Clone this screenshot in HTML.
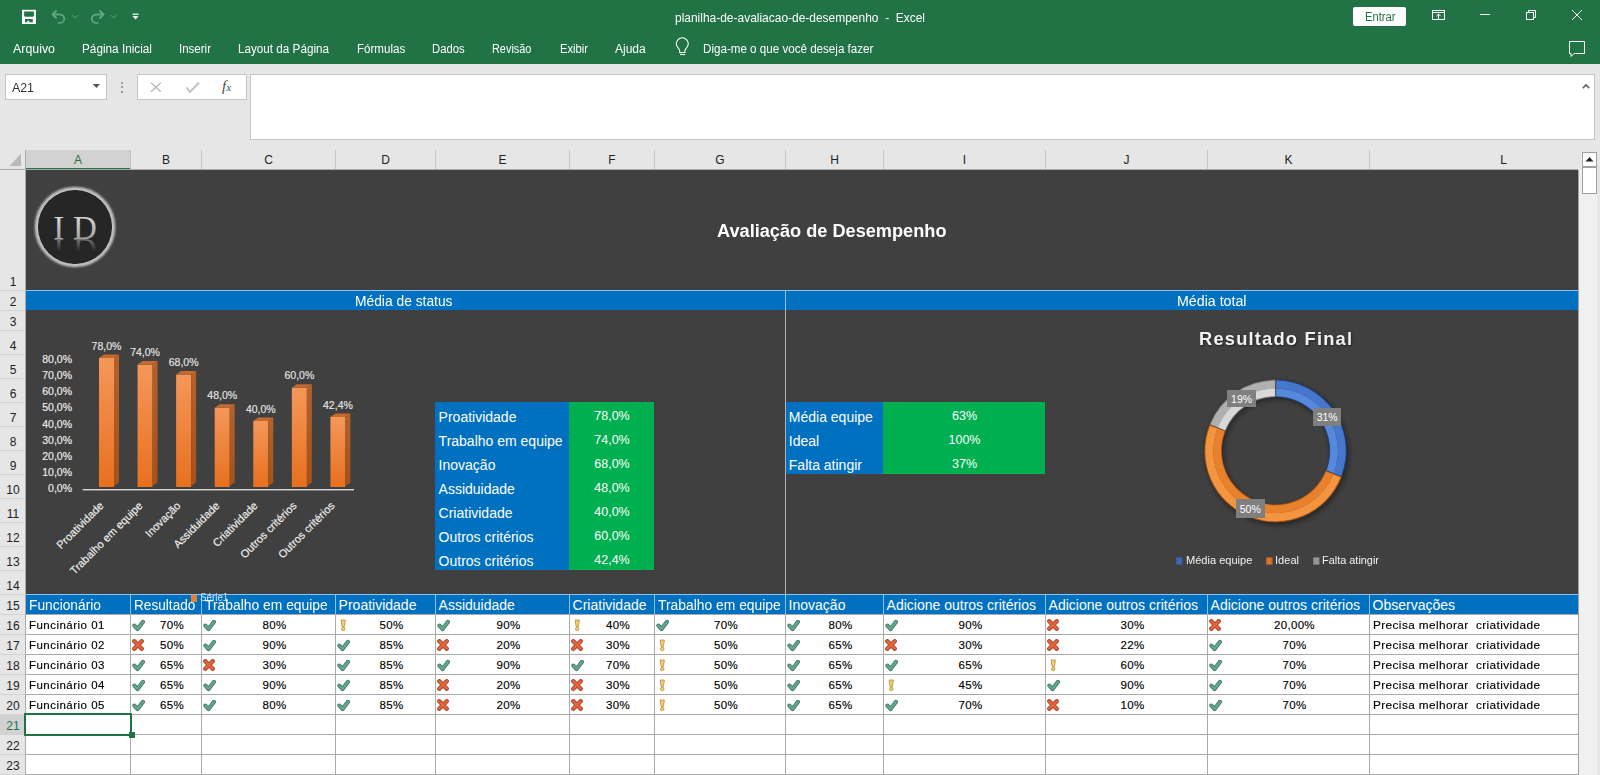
<!DOCTYPE html><html><head><meta charset="utf-8"><style>*{margin:0;padding:0;box-sizing:border-box}html,body{width:1600px;height:775px;overflow:hidden;background:#e6e6e6;font-family:"Liberation Sans",sans-serif}.a{position:absolute;white-space:pre}</style></head><body>
<div class="a" style="left:0px;top:0px;width:1600px;height:64px;background:#217346;"></div>
<svg class="a" style="left:0;top:0" width="160" height="32" viewBox="0 0 160 32">
<rect x="22" y="9.8" width="14" height="14.2" fill="#fff"/>
<path d="M24.1 11.5 h9.8 v4.3 l-0.9 0.9 h-8 l-0.9 -0.9z" fill="#217346"/>
<rect x="25" y="19" width="7.8" height="3.3" fill="#217346"/>
<rect x="27.2" y="20.8" width="2" height="1.6" fill="#fff"/>
<g fill="none" stroke="#5ea57d" stroke-width="1.9" stroke-linecap="round">
<path d="M52.5 14.5 L56 11 M52.5 14.5 L56 18 M52.5 14.5 H60 a4.2 4.2 0 0 1 0 8.4 H58.5"/>
<path d="M103.5 14.5 L100 11 M103.5 14.5 L100 18 M103.5 14.5 H96 a4.2 4.2 0 0 0 0 8.4 H97.5"/>
<path d="M72.5 15.5 l2.6 2.4 2.6 -2.4 M111 15.5 l2.6 2.4 2.6 -2.4" stroke-width="1"/>
</g>
<rect x="132.5" y="13.6" width="6" height="1.2" fill="#fff"/>
<path d="M132.5 16 h6 l-3 3.6z" fill="#fff"/>
</svg>
<div class="a" style="left:1353px;top:7px;width:53px;height:19px;background:#fff;border-radius:2px"></div>
<svg class="a" style="left:1420px;top:0" width="180" height="64" viewBox="1420 0 180 64">
<g fill="none" stroke="#fff" stroke-width="1">
<rect x="1432.5" y="10.5" width="12" height="9"/>
<path d="M1432.5 12.5 h12"/>
<path d="M1438.5 19 v-5 M1436.3 16.2 l2.2 -2.2 2.2 2.2"/>
<path d="M1480 14.5 h10"/>
<rect x="1526.5" y="12.5" width="7" height="7"/>
<path d="M1528.5 12.5 v-2 h7 v7 h-2"/>
<path d="M1572 10 l10 10 M1582 10 l-10 10"/>
<path d="M1569.5 41.5 h15 v12 h-10.5 l-3 3 v-3 h-1.5 z"/>
</g>
</svg>
<svg class="a" style="left:670px;top:36px" width="24" height="24" viewBox="670 36 24 24">
<g fill="none" stroke="#fff" stroke-width="1.1">
<path d="M679.6 52.5 v-2 c0-2 -3.3-3.2 -3.3-6.7 a6 6 0 0 1 12 0 c0 3.5 -3.3 4.7 -3.3 6.7 v2 z"/>
<path d="M680 54.5 h5"/>
</g></svg>
<div class="a" style="left:0px;top:64px;width:1600px;height:86px;background:#e6e6e6;"></div>
<div class="a" style="left:5px;top:74px;width:102px;height:26px;background:#fff;border:1px solid #c6c6c6"></div>
<svg class="a" style="left:90px;top:80px" width="14" height="12" viewBox="90 80 14 12"><path d="M92.8 84 h7.2 l-3.6 4z" fill="#555"/></svg>
<div class="a" style="left:121px;top:82px;width:2px;height:2px;background:#9a9a9a;"></div>
<div class="a" style="left:121px;top:86px;width:2px;height:2px;background:#9a9a9a;"></div>
<div class="a" style="left:121px;top:91px;width:2px;height:2px;background:#9a9a9a;"></div>
<div class="a" style="left:137px;top:74px;width:110px;height:26px;background:#fff;border:1px solid #c6c6c6"></div>
<svg class="a" style="left:140px;top:76px" width="110" height="22" viewBox="140 76 110 22">
<g fill="none" stroke="#b4b4b4" stroke-width="1.2">
<path d="M151 82.8 l9.8 9 M160.8 82.8 l-9.8 9"/>
</g>
<path d="M186.5 87.5 l3.5 4.5 l9-9.5" fill="none" stroke="#c2c2c2" stroke-width="2"/>
</svg>
<div class="a" style="left:250px;top:74px;width:1345px;height:66px;background:#fff;border:1px solid #c6c6c6"></div>
<svg class="a" style="left:1580px;top:80px" width="12" height="12" viewBox="1580 80 12 12"><path d="M1582.8 88.2 l3.2 -3.2 3.2 3.2" fill="none" stroke="#666" stroke-width="1.7"/></svg>
<div class="a" style="left:0px;top:150px;width:1580px;height:20px;background:#e6e6e6;"></div>
<div class="a" style="left:26px;top:150px;width:105px;height:19px;background:#d2d2d2;"></div>
<div class="a" style="left:26px;top:168px;width:105px;height:2px;background:#217346;"></div>
<div class="a" style="left:0px;top:169px;width:1578px;height:1px;background:#ababab;"></div>
<div class="a" style="left:130px;top:150px;width:1px;height:19px;background:#c6c6c6;"></div>
<div class="a" style="left:201px;top:150px;width:1px;height:19px;background:#c6c6c6;"></div>
<div class="a" style="left:335px;top:150px;width:1px;height:19px;background:#c6c6c6;"></div>
<div class="a" style="left:435px;top:150px;width:1px;height:19px;background:#c6c6c6;"></div>
<div class="a" style="left:569px;top:150px;width:1px;height:19px;background:#c6c6c6;"></div>
<div class="a" style="left:654px;top:150px;width:1px;height:19px;background:#c6c6c6;"></div>
<div class="a" style="left:785px;top:150px;width:1px;height:19px;background:#c6c6c6;"></div>
<div class="a" style="left:883px;top:150px;width:1px;height:19px;background:#c6c6c6;"></div>
<div class="a" style="left:1045px;top:150px;width:1px;height:19px;background:#c6c6c6;"></div>
<div class="a" style="left:1207px;top:150px;width:1px;height:19px;background:#c6c6c6;"></div>
<div class="a" style="left:1369px;top:150px;width:1px;height:19px;background:#c6c6c6;"></div>
<svg class="a" style="left:0;top:150px" width="26" height="20" viewBox="0 150 26 20"><path d="M21 153.5 v12.5 h-11.5z" fill="#b9b9b9"/></svg>
<div class="a" style="left:0px;top:170px;width:25px;height:605px;background:#e6e6e6;"></div>
<div class="a" style="left:25px;top:150px;width:1px;height:625px;background:#ababab;"></div>
<div class="a" style="left:0px;top:290px;width:25px;height:1px;background:#d4d4d4;"></div>
<div class="a" style="left:0px;top:310px;width:25px;height:1px;background:#d4d4d4;"></div>
<div class="a" style="left:0px;top:330px;width:25px;height:1px;background:#d4d4d4;"></div>
<div class="a" style="left:0px;top:354px;width:25px;height:1px;background:#d4d4d4;"></div>
<div class="a" style="left:0px;top:378px;width:25px;height:1px;background:#d4d4d4;"></div>
<div class="a" style="left:0px;top:402px;width:25px;height:1px;background:#d4d4d4;"></div>
<div class="a" style="left:0px;top:426px;width:25px;height:1px;background:#d4d4d4;"></div>
<div class="a" style="left:0px;top:450px;width:25px;height:1px;background:#d4d4d4;"></div>
<div class="a" style="left:0px;top:474px;width:25px;height:1px;background:#d4d4d4;"></div>
<div class="a" style="left:0px;top:498px;width:25px;height:1px;background:#d4d4d4;"></div>
<div class="a" style="left:0px;top:522px;width:25px;height:1px;background:#d4d4d4;"></div>
<div class="a" style="left:0px;top:546px;width:25px;height:1px;background:#d4d4d4;"></div>
<div class="a" style="left:0px;top:570px;width:25px;height:1px;background:#d4d4d4;"></div>
<div class="a" style="left:0px;top:594px;width:25px;height:1px;background:#d4d4d4;"></div>
<div class="a" style="left:0px;top:614px;width:25px;height:1px;background:#d4d4d4;"></div>
<div class="a" style="left:0px;top:634px;width:25px;height:1px;background:#d4d4d4;"></div>
<div class="a" style="left:0px;top:654px;width:25px;height:1px;background:#d4d4d4;"></div>
<div class="a" style="left:0px;top:674px;width:25px;height:1px;background:#d4d4d4;"></div>
<div class="a" style="left:0px;top:694px;width:25px;height:1px;background:#d4d4d4;"></div>
<div class="a" style="left:0px;top:714px;width:25px;height:1px;background:#d4d4d4;"></div>
<div class="a" style="left:0px;top:715px;width:25px;height:19px;background:#d2d2d2;"></div>
<div class="a" style="left:0px;top:734px;width:25px;height:1px;background:#d4d4d4;"></div>
<div class="a" style="left:0px;top:754px;width:25px;height:1px;background:#d4d4d4;"></div>
<div class="a" style="left:0px;top:774px;width:25px;height:1px;background:#d4d4d4;"></div>
<div class="a" style="left:26px;top:170px;width:1552px;height:424px;background:#404040;"></div>
<div class="a" style="left:1578px;top:170px;width:1px;height:605px;background:#a0a0a0;"></div>
<svg class="a" style="left:30px;top:182px" width="90" height="90" viewBox="30 182 90 90">
<defs>
<filter id="gl" x="-10%" y="-10%" width="120%" height="120%"><feGaussianBlur stdDeviation="1.1"/></filter>
<linearGradient id="ltr" x1="0" y1="216" x2="0" y2="239" gradientUnits="userSpaceOnUse"><stop offset="0" stop-color="#d8d8d8"/><stop offset="1" stop-color="#a0a0a0"/></linearGradient>
<linearGradient id="refl" x1="0" y1="239" x2="0" y2="227" gradientUnits="userSpaceOnUse"><stop offset="0" stop-color="#9a9a9a" stop-opacity="0.7"/><stop offset="1" stop-color="#9a9a9a" stop-opacity="0"/></linearGradient>
</defs>
<circle cx="75" cy="227" r="38.6" fill="none" stroke="#d4d4d4" stroke-width="3" filter="url(#gl)"/>
<circle cx="75" cy="227" r="37.2" fill="#262626"/>
<circle cx="75" cy="227" r="37.6" fill="none" stroke="#c8c8c8" stroke-width="1"/>
<text x="58.8" y="239" font-family="Liberation Serif" font-size="33" fill="url(#ltr)" text-anchor="middle">I</text>
<text x="85" y="239" font-family="Liberation Serif" font-size="33" fill="url(#ltr)" text-anchor="middle">D</text>
<g transform="translate(0,478) scale(1,-1)">
<text x="58.8" y="239" font-family="Liberation Serif" font-size="33" fill="url(#refl)" text-anchor="middle">I</text>
<text x="85" y="239" font-family="Liberation Serif" font-size="33" fill="url(#refl)" text-anchor="middle">D</text>
</g>
</svg>
<div class="a" style="left:26px;top:290px;width:1552px;height:1px;background:#8ec1ec;"></div>
<div class="a" style="left:26px;top:291px;width:1552px;height:19px;background:#0070c0;"></div>
<div class="a" style="left:785px;top:291px;width:1px;height:19px;background:#8ec1ec;"></div>
<div class="a" style="left:785px;top:310px;width:1px;height:284px;background:#b4b4b4;"></div>
<div class="a" style="left:435px;top:402px;width:134px;height:168px;background:#0070c0;"></div>
<div class="a" style="left:569px;top:402px;width:85px;height:168px;background:#00b050;"></div>
<div class="a" style="left:786px;top:402px;width:97px;height:72px;background:#0070c0;"></div>
<div class="a" style="left:883px;top:402px;width:162px;height:72px;background:#00b050;"></div>
<svg class="a" style="left:30px;top:330px" width="340" height="170" viewBox="30 330 340 170"><defs>
<linearGradient id="bf" x1="0" y1="0" x2="0" y2="1"><stop offset="0" stop-color="#f5975a"/><stop offset="1" stop-color="#e8701e"/></linearGradient>
<linearGradient id="bs" x1="0" y1="0" x2="0" y2="1"><stop offset="0" stop-color="#b4622a"/><stop offset="1" stop-color="#a45218"/></linearGradient>
</defs><path d="M100.00 488 h19 l-2 2 h-17z" fill="#333" opacity="0.6"/><rect x="99.00" y="357.98" width="15" height="129.02" fill="url(#bf)"/><path d="M114.00 357.98 l5 -3.5 v128.02 l-5 3.5z" fill="url(#bs)"/><path d="M99.00 357.98 l5 -3.5 h15 l-5 3.5z" fill="#c46a30"/><path d="M138.57 488 h19 l-2 2 h-17z" fill="#333" opacity="0.6"/><rect x="137.57" y="364.61" width="15" height="122.39" fill="url(#bf)"/><path d="M152.57 364.61 l5 -3.5 v121.39 l-5 3.5z" fill="url(#bs)"/><path d="M137.57 364.61 l5 -3.5 h15 l-5 3.5z" fill="#c46a30"/><path d="M177.14 488 h19 l-2 2 h-17z" fill="#333" opacity="0.6"/><rect x="176.14" y="374.56" width="15" height="112.44" fill="url(#bf)"/><path d="M191.14 374.56 l5 -3.5 v111.44 l-5 3.5z" fill="url(#bs)"/><path d="M176.14 374.56 l5 -3.5 h15 l-5 3.5z" fill="#c46a30"/><path d="M215.71 488 h19 l-2 2 h-17z" fill="#333" opacity="0.6"/><rect x="214.71" y="407.72" width="15" height="79.28" fill="url(#bf)"/><path d="M229.71 407.72 l5 -3.5 v78.28 l-5 3.5z" fill="url(#bs)"/><path d="M214.71 407.72 l5 -3.5 h15 l-5 3.5z" fill="#c46a30"/><path d="M254.28 488 h19 l-2 2 h-17z" fill="#333" opacity="0.6"/><rect x="253.28" y="420.98" width="15" height="66.02" fill="url(#bf)"/><path d="M268.28 420.98 l5 -3.5 v65.02 l-5 3.5z" fill="url(#bs)"/><path d="M253.28 420.98 l5 -3.5 h15 l-5 3.5z" fill="#c46a30"/><path d="M292.85 488 h19 l-2 2 h-17z" fill="#333" opacity="0.6"/><rect x="291.85" y="387.82" width="15" height="99.18" fill="url(#bf)"/><path d="M306.85 387.82 l5 -3.5 v98.18 l-5 3.5z" fill="url(#bs)"/><path d="M291.85 387.82 l5 -3.5 h15 l-5 3.5z" fill="#c46a30"/><path d="M331.42 488 h19 l-2 2 h-17z" fill="#333" opacity="0.6"/><rect x="330.42" y="417.00" width="15" height="70.00" fill="url(#bf)"/><path d="M345.42 417.00 l5 -3.5 v69.00 l-5 3.5z" fill="url(#bs)"/><path d="M330.42 417.00 l5 -3.5 h15 l-5 3.5z" fill="#c46a30"/><rect x="82.6" y="489" width="271.4" height="1.4" fill="#d9d9d9"/></svg>
<svg class="a" style="left:1190px;top:365px" width="175" height="175" viewBox="1190 365 175 175"><defs><filter id="sh" x="-20%" y="-20%" width="140%" height="140%"><feGaussianBlur stdDeviation="2"/></filter></defs><path d="M1275.60 378.80 A72 72 0 1 1 1275.59 378.80 L1275.59 397.30 A53.5 53.5 0 1 0 1275.60 397.30Z" fill="#151515" opacity="0.55" transform="translate(1.5,2.5)" filter="url(#sh)"/><path d="M1275.60 379.60 A71.2 71.2 0 0 1 1341.80 477.01 L1325.53 470.57 A53.7 53.7 0 0 0 1275.60 397.10Z" fill="#22407e"/><path d="M1276.34 380.60 A70.2 70.2 0 0 1 1341.14 475.96 L1333.76 473.13 A62.3 62.3 0 0 0 1276.25 388.50Z" fill="#4677cc"/><path d="M1276.25 388.50 A62.3 62.3 0 0 1 1333.76 473.13 L1326.57 470.37 A54.6 54.6 0 0 0 1276.17 396.20Z" fill="#5688dc"/><path d="M1341.80 477.01 A71.2 71.2 0 1 1 1209.40 424.59 L1225.67 431.03 A53.7 53.7 0 1 0 1325.53 470.57Z" fill="#a8520f"/><path d="M1340.60 477.32 A70.2 70.2 0 0 1 1210.06 425.64 L1217.44 428.47 A62.3 62.3 0 0 0 1333.28 474.34Z" fill="#f39440"/><path d="M1333.28 474.34 A62.3 62.3 0 0 1 1217.44 428.47 L1224.63 431.23 A54.6 54.6 0 0 0 1326.15 471.43Z" fill="#e8812b"/><path d="M1209.40 424.59 A71.2 71.2 0 0 1 1275.60 379.60 L1275.60 397.10 A53.7 53.7 0 0 0 1225.67 431.03Z" fill="#6f6f6f"/><path d="M1210.60 424.28 A70.2 70.2 0 0 1 1274.86 380.60 L1274.95 388.50 A62.3 62.3 0 0 0 1217.92 427.26Z" fill="#b0b0b0"/><path d="M1217.92 427.26 A62.3 62.3 0 0 1 1274.95 388.50 L1275.03 396.20 A54.6 54.6 0 0 0 1225.05 430.17Z" fill="#d8d8d8"/></svg>
<div class="a" style="left:1227px;top:390px;width:29px;height:17px;background:#7f7f7f;"></div>
<div class="a" style="left:1313px;top:408px;width:28px;height:18px;background:#7f7f7f;"></div>
<div class="a" style="left:1236px;top:499px;width:29px;height:19px;background:#7f7f7f;"></div>
<svg class="a" style="left:1176px;top:557px" width="8" height="8" viewBox="0 0 8 8"><rect x="0" y="0.5" width="6.6" height="7" fill="#3d68b8" opacity="0.75"/><path d="M0.6 0.8h5.4l-1.6 3.2 1.6 3.2h-5.4l1.6-3.2z" fill="#3d68b8"/></svg>
<svg class="a" style="left:1266.3px;top:557px" width="8" height="8" viewBox="0 0 8 8"><rect x="0" y="0.5" width="6.6" height="7" fill="#e07428" opacity="0.75"/><path d="M0.6 0.8h5.4l-1.6 3.2 1.6 3.2h-5.4l1.6-3.2z" fill="#e07428"/></svg>
<svg class="a" style="left:1312.5px;top:557px" width="8" height="8" viewBox="0 0 8 8"><rect x="0" y="0.5" width="6.6" height="7" fill="#9a9a9a" opacity="0.75"/><path d="M0.6 0.8h5.4l-1.6 3.2 1.6 3.2h-5.4l1.6-3.2z" fill="#9a9a9a"/></svg>
<div class="a" style="left:26px;top:594px;width:1552px;height:1px;background:#8ec1ec;"></div>
<div class="a" style="left:26px;top:595px;width:1552px;height:19px;background:#0070c0;"></div>
<div class="a" style="left:130px;top:595px;width:1px;height:19px;background:#8ec1ec;"></div>
<div class="a" style="left:201px;top:595px;width:1px;height:19px;background:#8ec1ec;"></div>
<div class="a" style="left:335px;top:595px;width:1px;height:19px;background:#8ec1ec;"></div>
<div class="a" style="left:435px;top:595px;width:1px;height:19px;background:#8ec1ec;"></div>
<div class="a" style="left:569px;top:595px;width:1px;height:19px;background:#8ec1ec;"></div>
<div class="a" style="left:654px;top:595px;width:1px;height:19px;background:#8ec1ec;"></div>
<div class="a" style="left:785px;top:595px;width:1px;height:19px;background:#8ec1ec;"></div>
<div class="a" style="left:883px;top:595px;width:1px;height:19px;background:#8ec1ec;"></div>
<div class="a" style="left:1045px;top:595px;width:1px;height:19px;background:#8ec1ec;"></div>
<div class="a" style="left:1207px;top:595px;width:1px;height:19px;background:#8ec1ec;"></div>
<div class="a" style="left:1369px;top:595px;width:1px;height:19px;background:#8ec1ec;"></div>
<div class="a" style="left:26px;top:614px;width:1552px;height:161px;background:#ffffff;"></div>
<div class="a" style="left:26px;top:614px;width:1552px;height:1px;background:#ababab;"></div>
<div class="a" style="left:26px;top:634px;width:1552px;height:1px;background:#ababab;"></div>
<div class="a" style="left:26px;top:654px;width:1552px;height:1px;background:#ababab;"></div>
<div class="a" style="left:26px;top:674px;width:1552px;height:1px;background:#ababab;"></div>
<div class="a" style="left:26px;top:694px;width:1552px;height:1px;background:#ababab;"></div>
<div class="a" style="left:26px;top:714px;width:1552px;height:1px;background:#ababab;"></div>
<div class="a" style="left:26px;top:734px;width:1552px;height:1px;background:#ababab;"></div>
<div class="a" style="left:26px;top:754px;width:1552px;height:1px;background:#ababab;"></div>
<div class="a" style="left:26px;top:774px;width:1552px;height:1px;background:#ababab;"></div>
<div class="a" style="left:130px;top:614px;width:1px;height:161px;background:#ababab;"></div>
<div class="a" style="left:201px;top:614px;width:1px;height:161px;background:#ababab;"></div>
<div class="a" style="left:335px;top:614px;width:1px;height:161px;background:#ababab;"></div>
<div class="a" style="left:435px;top:614px;width:1px;height:161px;background:#ababab;"></div>
<div class="a" style="left:569px;top:614px;width:1px;height:161px;background:#ababab;"></div>
<div class="a" style="left:654px;top:614px;width:1px;height:161px;background:#ababab;"></div>
<div class="a" style="left:785px;top:614px;width:1px;height:161px;background:#ababab;"></div>
<div class="a" style="left:883px;top:614px;width:1px;height:161px;background:#ababab;"></div>
<div class="a" style="left:1045px;top:614px;width:1px;height:161px;background:#ababab;"></div>
<div class="a" style="left:1207px;top:614px;width:1px;height:161px;background:#ababab;"></div>
<div class="a" style="left:1369px;top:614px;width:1px;height:161px;background:#ababab;"></div>
<svg class="a" style="left:132px;top:618.5px" width="13" height="13" viewBox="0 0 12.2 13"><path d="M2 6.6 L5.2 10 L10.6 2.8" fill="none" stroke="#437863" stroke-width="4.1" stroke-linecap="round" stroke-linejoin="round"/><path d="M2 6.6 L5.2 10 L10.6 2.8" fill="none" stroke="#62a78c" stroke-width="2.4" stroke-linecap="round" stroke-linejoin="round"/></svg>
<svg class="a" style="left:203px;top:618.5px" width="13" height="13" viewBox="0 0 12.2 13"><path d="M2 6.6 L5.2 10 L10.6 2.8" fill="none" stroke="#437863" stroke-width="4.1" stroke-linecap="round" stroke-linejoin="round"/><path d="M2 6.6 L5.2 10 L10.6 2.8" fill="none" stroke="#62a78c" stroke-width="2.4" stroke-linecap="round" stroke-linejoin="round"/></svg>
<svg class="a" style="left:336.6px;top:618.6px" width="13" height="13" viewBox="0 0 13 13"><path d="M4.1 1 h4.3 l-1 6.4 h-2.3z" fill="#f4cd72" stroke="#b9923e" stroke-width="0.85" stroke-linejoin="round"/><circle cx="6.25" cy="9.9" r="1.75" fill="#f4cd72" stroke="#b9923e" stroke-width="0.85"/></svg>
<svg class="a" style="left:437px;top:618.5px" width="13" height="13" viewBox="0 0 12.2 13"><path d="M2 6.6 L5.2 10 L10.6 2.8" fill="none" stroke="#437863" stroke-width="4.1" stroke-linecap="round" stroke-linejoin="round"/><path d="M2 6.6 L5.2 10 L10.6 2.8" fill="none" stroke="#62a78c" stroke-width="2.4" stroke-linecap="round" stroke-linejoin="round"/></svg>
<svg class="a" style="left:570.6px;top:618.6px" width="13" height="13" viewBox="0 0 13 13"><path d="M4.1 1 h4.3 l-1 6.4 h-2.3z" fill="#f4cd72" stroke="#b9923e" stroke-width="0.85" stroke-linejoin="round"/><circle cx="6.25" cy="9.9" r="1.75" fill="#f4cd72" stroke="#b9923e" stroke-width="0.85"/></svg>
<svg class="a" style="left:656px;top:618.5px" width="13" height="13" viewBox="0 0 12.2 13"><path d="M2 6.6 L5.2 10 L10.6 2.8" fill="none" stroke="#437863" stroke-width="4.1" stroke-linecap="round" stroke-linejoin="round"/><path d="M2 6.6 L5.2 10 L10.6 2.8" fill="none" stroke="#62a78c" stroke-width="2.4" stroke-linecap="round" stroke-linejoin="round"/></svg>
<svg class="a" style="left:787px;top:618.5px" width="13" height="13" viewBox="0 0 12.2 13"><path d="M2 6.6 L5.2 10 L10.6 2.8" fill="none" stroke="#437863" stroke-width="4.1" stroke-linecap="round" stroke-linejoin="round"/><path d="M2 6.6 L5.2 10 L10.6 2.8" fill="none" stroke="#62a78c" stroke-width="2.4" stroke-linecap="round" stroke-linejoin="round"/></svg>
<svg class="a" style="left:885px;top:618.5px" width="13" height="13" viewBox="0 0 12.2 13"><path d="M2 6.6 L5.2 10 L10.6 2.8" fill="none" stroke="#437863" stroke-width="4.1" stroke-linecap="round" stroke-linejoin="round"/><path d="M2 6.6 L5.2 10 L10.6 2.8" fill="none" stroke="#62a78c" stroke-width="2.4" stroke-linecap="round" stroke-linejoin="round"/></svg>
<svg class="a" style="left:1047px;top:619px" width="12" height="12" viewBox="0 0 12 12"><path d="M2.3 2.3 L9.7 9.7 M9.7 2.3 L2.3 9.7" fill="none" stroke="#a8462a" stroke-width="4.4" stroke-linecap="round"/><path d="M2.3 2.3 L9.7 9.7 M9.7 2.3 L2.3 9.7" fill="none" stroke="#e4643c" stroke-width="2.6" stroke-linecap="round"/></svg>
<svg class="a" style="left:1209px;top:619px" width="12" height="12" viewBox="0 0 12 12"><path d="M2.3 2.3 L9.7 9.7 M9.7 2.3 L2.3 9.7" fill="none" stroke="#a8462a" stroke-width="4.4" stroke-linecap="round"/><path d="M2.3 2.3 L9.7 9.7 M9.7 2.3 L2.3 9.7" fill="none" stroke="#e4643c" stroke-width="2.6" stroke-linecap="round"/></svg>
<svg class="a" style="left:132px;top:639px" width="12" height="12" viewBox="0 0 12 12"><path d="M2.3 2.3 L9.7 9.7 M9.7 2.3 L2.3 9.7" fill="none" stroke="#a8462a" stroke-width="4.4" stroke-linecap="round"/><path d="M2.3 2.3 L9.7 9.7 M9.7 2.3 L2.3 9.7" fill="none" stroke="#e4643c" stroke-width="2.6" stroke-linecap="round"/></svg>
<svg class="a" style="left:203px;top:638.5px" width="13" height="13" viewBox="0 0 12.2 13"><path d="M2 6.6 L5.2 10 L10.6 2.8" fill="none" stroke="#437863" stroke-width="4.1" stroke-linecap="round" stroke-linejoin="round"/><path d="M2 6.6 L5.2 10 L10.6 2.8" fill="none" stroke="#62a78c" stroke-width="2.4" stroke-linecap="round" stroke-linejoin="round"/></svg>
<svg class="a" style="left:337px;top:638.5px" width="13" height="13" viewBox="0 0 12.2 13"><path d="M2 6.6 L5.2 10 L10.6 2.8" fill="none" stroke="#437863" stroke-width="4.1" stroke-linecap="round" stroke-linejoin="round"/><path d="M2 6.6 L5.2 10 L10.6 2.8" fill="none" stroke="#62a78c" stroke-width="2.4" stroke-linecap="round" stroke-linejoin="round"/></svg>
<svg class="a" style="left:437px;top:639px" width="12" height="12" viewBox="0 0 12 12"><path d="M2.3 2.3 L9.7 9.7 M9.7 2.3 L2.3 9.7" fill="none" stroke="#a8462a" stroke-width="4.4" stroke-linecap="round"/><path d="M2.3 2.3 L9.7 9.7 M9.7 2.3 L2.3 9.7" fill="none" stroke="#e4643c" stroke-width="2.6" stroke-linecap="round"/></svg>
<svg class="a" style="left:571px;top:639px" width="12" height="12" viewBox="0 0 12 12"><path d="M2.3 2.3 L9.7 9.7 M9.7 2.3 L2.3 9.7" fill="none" stroke="#a8462a" stroke-width="4.4" stroke-linecap="round"/><path d="M2.3 2.3 L9.7 9.7 M9.7 2.3 L2.3 9.7" fill="none" stroke="#e4643c" stroke-width="2.6" stroke-linecap="round"/></svg>
<svg class="a" style="left:655.6px;top:638.6px" width="13" height="13" viewBox="0 0 13 13"><path d="M4.1 1 h4.3 l-1 6.4 h-2.3z" fill="#f4cd72" stroke="#b9923e" stroke-width="0.85" stroke-linejoin="round"/><circle cx="6.25" cy="9.9" r="1.75" fill="#f4cd72" stroke="#b9923e" stroke-width="0.85"/></svg>
<svg class="a" style="left:787px;top:638.5px" width="13" height="13" viewBox="0 0 12.2 13"><path d="M2 6.6 L5.2 10 L10.6 2.8" fill="none" stroke="#437863" stroke-width="4.1" stroke-linecap="round" stroke-linejoin="round"/><path d="M2 6.6 L5.2 10 L10.6 2.8" fill="none" stroke="#62a78c" stroke-width="2.4" stroke-linecap="round" stroke-linejoin="round"/></svg>
<svg class="a" style="left:885px;top:639px" width="12" height="12" viewBox="0 0 12 12"><path d="M2.3 2.3 L9.7 9.7 M9.7 2.3 L2.3 9.7" fill="none" stroke="#a8462a" stroke-width="4.4" stroke-linecap="round"/><path d="M2.3 2.3 L9.7 9.7 M9.7 2.3 L2.3 9.7" fill="none" stroke="#e4643c" stroke-width="2.6" stroke-linecap="round"/></svg>
<svg class="a" style="left:1047px;top:639px" width="12" height="12" viewBox="0 0 12 12"><path d="M2.3 2.3 L9.7 9.7 M9.7 2.3 L2.3 9.7" fill="none" stroke="#a8462a" stroke-width="4.4" stroke-linecap="round"/><path d="M2.3 2.3 L9.7 9.7 M9.7 2.3 L2.3 9.7" fill="none" stroke="#e4643c" stroke-width="2.6" stroke-linecap="round"/></svg>
<svg class="a" style="left:1209px;top:638.5px" width="13" height="13" viewBox="0 0 12.2 13"><path d="M2 6.6 L5.2 10 L10.6 2.8" fill="none" stroke="#437863" stroke-width="4.1" stroke-linecap="round" stroke-linejoin="round"/><path d="M2 6.6 L5.2 10 L10.6 2.8" fill="none" stroke="#62a78c" stroke-width="2.4" stroke-linecap="round" stroke-linejoin="round"/></svg>
<svg class="a" style="left:132px;top:658.5px" width="13" height="13" viewBox="0 0 12.2 13"><path d="M2 6.6 L5.2 10 L10.6 2.8" fill="none" stroke="#437863" stroke-width="4.1" stroke-linecap="round" stroke-linejoin="round"/><path d="M2 6.6 L5.2 10 L10.6 2.8" fill="none" stroke="#62a78c" stroke-width="2.4" stroke-linecap="round" stroke-linejoin="round"/></svg>
<svg class="a" style="left:203px;top:659px" width="12" height="12" viewBox="0 0 12 12"><path d="M2.3 2.3 L9.7 9.7 M9.7 2.3 L2.3 9.7" fill="none" stroke="#a8462a" stroke-width="4.4" stroke-linecap="round"/><path d="M2.3 2.3 L9.7 9.7 M9.7 2.3 L2.3 9.7" fill="none" stroke="#e4643c" stroke-width="2.6" stroke-linecap="round"/></svg>
<svg class="a" style="left:337px;top:658.5px" width="13" height="13" viewBox="0 0 12.2 13"><path d="M2 6.6 L5.2 10 L10.6 2.8" fill="none" stroke="#437863" stroke-width="4.1" stroke-linecap="round" stroke-linejoin="round"/><path d="M2 6.6 L5.2 10 L10.6 2.8" fill="none" stroke="#62a78c" stroke-width="2.4" stroke-linecap="round" stroke-linejoin="round"/></svg>
<svg class="a" style="left:437px;top:658.5px" width="13" height="13" viewBox="0 0 12.2 13"><path d="M2 6.6 L5.2 10 L10.6 2.8" fill="none" stroke="#437863" stroke-width="4.1" stroke-linecap="round" stroke-linejoin="round"/><path d="M2 6.6 L5.2 10 L10.6 2.8" fill="none" stroke="#62a78c" stroke-width="2.4" stroke-linecap="round" stroke-linejoin="round"/></svg>
<svg class="a" style="left:571px;top:658.5px" width="13" height="13" viewBox="0 0 12.2 13"><path d="M2 6.6 L5.2 10 L10.6 2.8" fill="none" stroke="#437863" stroke-width="4.1" stroke-linecap="round" stroke-linejoin="round"/><path d="M2 6.6 L5.2 10 L10.6 2.8" fill="none" stroke="#62a78c" stroke-width="2.4" stroke-linecap="round" stroke-linejoin="round"/></svg>
<svg class="a" style="left:655.6px;top:658.6px" width="13" height="13" viewBox="0 0 13 13"><path d="M4.1 1 h4.3 l-1 6.4 h-2.3z" fill="#f4cd72" stroke="#b9923e" stroke-width="0.85" stroke-linejoin="round"/><circle cx="6.25" cy="9.9" r="1.75" fill="#f4cd72" stroke="#b9923e" stroke-width="0.85"/></svg>
<svg class="a" style="left:787px;top:658.5px" width="13" height="13" viewBox="0 0 12.2 13"><path d="M2 6.6 L5.2 10 L10.6 2.8" fill="none" stroke="#437863" stroke-width="4.1" stroke-linecap="round" stroke-linejoin="round"/><path d="M2 6.6 L5.2 10 L10.6 2.8" fill="none" stroke="#62a78c" stroke-width="2.4" stroke-linecap="round" stroke-linejoin="round"/></svg>
<svg class="a" style="left:885px;top:658.5px" width="13" height="13" viewBox="0 0 12.2 13"><path d="M2 6.6 L5.2 10 L10.6 2.8" fill="none" stroke="#437863" stroke-width="4.1" stroke-linecap="round" stroke-linejoin="round"/><path d="M2 6.6 L5.2 10 L10.6 2.8" fill="none" stroke="#62a78c" stroke-width="2.4" stroke-linecap="round" stroke-linejoin="round"/></svg>
<svg class="a" style="left:1046.6px;top:658.6px" width="13" height="13" viewBox="0 0 13 13"><path d="M4.1 1 h4.3 l-1 6.4 h-2.3z" fill="#f4cd72" stroke="#b9923e" stroke-width="0.85" stroke-linejoin="round"/><circle cx="6.25" cy="9.9" r="1.75" fill="#f4cd72" stroke="#b9923e" stroke-width="0.85"/></svg>
<svg class="a" style="left:1209px;top:658.5px" width="13" height="13" viewBox="0 0 12.2 13"><path d="M2 6.6 L5.2 10 L10.6 2.8" fill="none" stroke="#437863" stroke-width="4.1" stroke-linecap="round" stroke-linejoin="round"/><path d="M2 6.6 L5.2 10 L10.6 2.8" fill="none" stroke="#62a78c" stroke-width="2.4" stroke-linecap="round" stroke-linejoin="round"/></svg>
<svg class="a" style="left:132px;top:678.5px" width="13" height="13" viewBox="0 0 12.2 13"><path d="M2 6.6 L5.2 10 L10.6 2.8" fill="none" stroke="#437863" stroke-width="4.1" stroke-linecap="round" stroke-linejoin="round"/><path d="M2 6.6 L5.2 10 L10.6 2.8" fill="none" stroke="#62a78c" stroke-width="2.4" stroke-linecap="round" stroke-linejoin="round"/></svg>
<svg class="a" style="left:203px;top:678.5px" width="13" height="13" viewBox="0 0 12.2 13"><path d="M2 6.6 L5.2 10 L10.6 2.8" fill="none" stroke="#437863" stroke-width="4.1" stroke-linecap="round" stroke-linejoin="round"/><path d="M2 6.6 L5.2 10 L10.6 2.8" fill="none" stroke="#62a78c" stroke-width="2.4" stroke-linecap="round" stroke-linejoin="round"/></svg>
<svg class="a" style="left:337px;top:678.5px" width="13" height="13" viewBox="0 0 12.2 13"><path d="M2 6.6 L5.2 10 L10.6 2.8" fill="none" stroke="#437863" stroke-width="4.1" stroke-linecap="round" stroke-linejoin="round"/><path d="M2 6.6 L5.2 10 L10.6 2.8" fill="none" stroke="#62a78c" stroke-width="2.4" stroke-linecap="round" stroke-linejoin="round"/></svg>
<svg class="a" style="left:437px;top:679px" width="12" height="12" viewBox="0 0 12 12"><path d="M2.3 2.3 L9.7 9.7 M9.7 2.3 L2.3 9.7" fill="none" stroke="#a8462a" stroke-width="4.4" stroke-linecap="round"/><path d="M2.3 2.3 L9.7 9.7 M9.7 2.3 L2.3 9.7" fill="none" stroke="#e4643c" stroke-width="2.6" stroke-linecap="round"/></svg>
<svg class="a" style="left:571px;top:679px" width="12" height="12" viewBox="0 0 12 12"><path d="M2.3 2.3 L9.7 9.7 M9.7 2.3 L2.3 9.7" fill="none" stroke="#a8462a" stroke-width="4.4" stroke-linecap="round"/><path d="M2.3 2.3 L9.7 9.7 M9.7 2.3 L2.3 9.7" fill="none" stroke="#e4643c" stroke-width="2.6" stroke-linecap="round"/></svg>
<svg class="a" style="left:655.6px;top:678.6px" width="13" height="13" viewBox="0 0 13 13"><path d="M4.1 1 h4.3 l-1 6.4 h-2.3z" fill="#f4cd72" stroke="#b9923e" stroke-width="0.85" stroke-linejoin="round"/><circle cx="6.25" cy="9.9" r="1.75" fill="#f4cd72" stroke="#b9923e" stroke-width="0.85"/></svg>
<svg class="a" style="left:787px;top:678.5px" width="13" height="13" viewBox="0 0 12.2 13"><path d="M2 6.6 L5.2 10 L10.6 2.8" fill="none" stroke="#437863" stroke-width="4.1" stroke-linecap="round" stroke-linejoin="round"/><path d="M2 6.6 L5.2 10 L10.6 2.8" fill="none" stroke="#62a78c" stroke-width="2.4" stroke-linecap="round" stroke-linejoin="round"/></svg>
<svg class="a" style="left:884.6px;top:678.6px" width="13" height="13" viewBox="0 0 13 13"><path d="M4.1 1 h4.3 l-1 6.4 h-2.3z" fill="#f4cd72" stroke="#b9923e" stroke-width="0.85" stroke-linejoin="round"/><circle cx="6.25" cy="9.9" r="1.75" fill="#f4cd72" stroke="#b9923e" stroke-width="0.85"/></svg>
<svg class="a" style="left:1047px;top:678.5px" width="13" height="13" viewBox="0 0 12.2 13"><path d="M2 6.6 L5.2 10 L10.6 2.8" fill="none" stroke="#437863" stroke-width="4.1" stroke-linecap="round" stroke-linejoin="round"/><path d="M2 6.6 L5.2 10 L10.6 2.8" fill="none" stroke="#62a78c" stroke-width="2.4" stroke-linecap="round" stroke-linejoin="round"/></svg>
<svg class="a" style="left:1209px;top:678.5px" width="13" height="13" viewBox="0 0 12.2 13"><path d="M2 6.6 L5.2 10 L10.6 2.8" fill="none" stroke="#437863" stroke-width="4.1" stroke-linecap="round" stroke-linejoin="round"/><path d="M2 6.6 L5.2 10 L10.6 2.8" fill="none" stroke="#62a78c" stroke-width="2.4" stroke-linecap="round" stroke-linejoin="round"/></svg>
<svg class="a" style="left:132px;top:698.5px" width="13" height="13" viewBox="0 0 12.2 13"><path d="M2 6.6 L5.2 10 L10.6 2.8" fill="none" stroke="#437863" stroke-width="4.1" stroke-linecap="round" stroke-linejoin="round"/><path d="M2 6.6 L5.2 10 L10.6 2.8" fill="none" stroke="#62a78c" stroke-width="2.4" stroke-linecap="round" stroke-linejoin="round"/></svg>
<svg class="a" style="left:203px;top:698.5px" width="13" height="13" viewBox="0 0 12.2 13"><path d="M2 6.6 L5.2 10 L10.6 2.8" fill="none" stroke="#437863" stroke-width="4.1" stroke-linecap="round" stroke-linejoin="round"/><path d="M2 6.6 L5.2 10 L10.6 2.8" fill="none" stroke="#62a78c" stroke-width="2.4" stroke-linecap="round" stroke-linejoin="round"/></svg>
<svg class="a" style="left:337px;top:698.5px" width="13" height="13" viewBox="0 0 12.2 13"><path d="M2 6.6 L5.2 10 L10.6 2.8" fill="none" stroke="#437863" stroke-width="4.1" stroke-linecap="round" stroke-linejoin="round"/><path d="M2 6.6 L5.2 10 L10.6 2.8" fill="none" stroke="#62a78c" stroke-width="2.4" stroke-linecap="round" stroke-linejoin="round"/></svg>
<svg class="a" style="left:437px;top:699px" width="12" height="12" viewBox="0 0 12 12"><path d="M2.3 2.3 L9.7 9.7 M9.7 2.3 L2.3 9.7" fill="none" stroke="#a8462a" stroke-width="4.4" stroke-linecap="round"/><path d="M2.3 2.3 L9.7 9.7 M9.7 2.3 L2.3 9.7" fill="none" stroke="#e4643c" stroke-width="2.6" stroke-linecap="round"/></svg>
<svg class="a" style="left:571px;top:699px" width="12" height="12" viewBox="0 0 12 12"><path d="M2.3 2.3 L9.7 9.7 M9.7 2.3 L2.3 9.7" fill="none" stroke="#a8462a" stroke-width="4.4" stroke-linecap="round"/><path d="M2.3 2.3 L9.7 9.7 M9.7 2.3 L2.3 9.7" fill="none" stroke="#e4643c" stroke-width="2.6" stroke-linecap="round"/></svg>
<svg class="a" style="left:655.6px;top:698.6px" width="13" height="13" viewBox="0 0 13 13"><path d="M4.1 1 h4.3 l-1 6.4 h-2.3z" fill="#f4cd72" stroke="#b9923e" stroke-width="0.85" stroke-linejoin="round"/><circle cx="6.25" cy="9.9" r="1.75" fill="#f4cd72" stroke="#b9923e" stroke-width="0.85"/></svg>
<svg class="a" style="left:787px;top:698.5px" width="13" height="13" viewBox="0 0 12.2 13"><path d="M2 6.6 L5.2 10 L10.6 2.8" fill="none" stroke="#437863" stroke-width="4.1" stroke-linecap="round" stroke-linejoin="round"/><path d="M2 6.6 L5.2 10 L10.6 2.8" fill="none" stroke="#62a78c" stroke-width="2.4" stroke-linecap="round" stroke-linejoin="round"/></svg>
<svg class="a" style="left:885px;top:698.5px" width="13" height="13" viewBox="0 0 12.2 13"><path d="M2 6.6 L5.2 10 L10.6 2.8" fill="none" stroke="#437863" stroke-width="4.1" stroke-linecap="round" stroke-linejoin="round"/><path d="M2 6.6 L5.2 10 L10.6 2.8" fill="none" stroke="#62a78c" stroke-width="2.4" stroke-linecap="round" stroke-linejoin="round"/></svg>
<svg class="a" style="left:1047px;top:699px" width="12" height="12" viewBox="0 0 12 12"><path d="M2.3 2.3 L9.7 9.7 M9.7 2.3 L2.3 9.7" fill="none" stroke="#a8462a" stroke-width="4.4" stroke-linecap="round"/><path d="M2.3 2.3 L9.7 9.7 M9.7 2.3 L2.3 9.7" fill="none" stroke="#e4643c" stroke-width="2.6" stroke-linecap="round"/></svg>
<svg class="a" style="left:1209px;top:698.5px" width="13" height="13" viewBox="0 0 12.2 13"><path d="M2 6.6 L5.2 10 L10.6 2.8" fill="none" stroke="#437863" stroke-width="4.1" stroke-linecap="round" stroke-linejoin="round"/><path d="M2 6.6 L5.2 10 L10.6 2.8" fill="none" stroke="#62a78c" stroke-width="2.4" stroke-linecap="round" stroke-linejoin="round"/></svg>
<div class="a" style="left:1579px;top:150px;width:21px;height:625px;background:#e6e6e6;"></div>
<div class="a" style="left:1579px;top:170px;width:18px;height:605px;background:#f0f0f0;"></div>
<div class="a" style="left:1581px;top:152px;width:16px;height:18px;background:#f0f0f0;"></div>
<div class="a" style="left:1582px;top:152px;width:15px;height:15px;background:#fff;border:1px solid #a0a0a0"></div>
<svg class="a" style="left:1582px;top:152px" width="15" height="15" viewBox="0 0 15 15"><path d="M3.5 9.5 h8 l-4 -4.5z" fill="#222"/></svg>
<div class="a" style="left:1582px;top:167px;width:15px;height:27px;background:#fff;border:1px solid #a0a0a0"></div>
<div class="a" style="top:11.84px;font-size:12px;line-height:12px;color:#fff;left:675.00px;"><span style="display:inline-block;transform:scaleX(0.9968);transform-origin:left center">planilha-de-avaliacao-de-desempenho&nbsp;&nbsp;-&nbsp;&nbsp;Excel</span></div>
<div class="a" style="top:10.84px;font-size:12px;line-height:12px;color:#217346;left:1364.50px;"><span style="display:inline-block;transform:scaleX(0.9331);transform-origin:left center">Entrar</span></div>
<div class="a" style="top:42.84px;font-size:12px;line-height:12px;color:#fff;left:13.00px;"><span style="display:inline-block;transform:scaleX(1.0323);transform-origin:left center">Arquivo</span></div>
<div class="a" style="top:42.84px;font-size:12px;line-height:12px;color:#fff;left:82.00px;"><span style="display:inline-block;transform:scaleX(0.9805);transform-origin:left center">Página Inicial</span></div>
<div class="a" style="top:42.84px;font-size:12px;line-height:12px;color:#fff;left:179.00px;"><span style="display:inline-block;transform:scaleX(0.9597);transform-origin:left center">Inserir</span></div>
<div class="a" style="top:42.84px;font-size:12px;line-height:12px;color:#fff;left:238.00px;"><span style="display:inline-block;transform:scaleX(0.9741);transform-origin:left center">Layout da Página</span></div>
<div class="a" style="top:42.84px;font-size:12px;line-height:12px;color:#fff;left:356.60px;"><span style="display:inline-block;transform:scaleX(0.9637);transform-origin:left center">Fórmulas</span></div>
<div class="a" style="top:42.84px;font-size:12px;line-height:12px;color:#fff;left:432.40px;"><span style="display:inline-block;transform:scaleX(0.9398);transform-origin:left center">Dados</span></div>
<div class="a" style="top:42.84px;font-size:12px;line-height:12px;color:#fff;left:492.30px;"><span style="display:inline-block;transform:scaleX(0.9087);transform-origin:left center">Revisão</span></div>
<div class="a" style="top:42.84px;font-size:12px;line-height:12px;color:#fff;left:559.50px;"><span style="display:inline-block;transform:scaleX(0.9362);transform-origin:left center">Exibir</span></div>
<div class="a" style="top:42.84px;font-size:12px;line-height:12px;color:#fff;left:615.20px;"><span style="display:inline-block;transform:scaleX(0.9999);transform-origin:left center">Ajuda</span></div>
<div class="a" style="top:42.84px;font-size:12px;line-height:12px;color:#fff;left:702.60px;"><span style="display:inline-block;transform:scaleX(0.9676);transform-origin:left center">Diga-me o que você deseja fazer</span></div>
<div class="a" style="top:81.54px;font-size:12px;line-height:12px;color:#333;left:12.40px;"><span style="display:inline-block;transform:scaleX(1.0300);transform-origin:left center">A21</span></div>
<div class="a" style="top:79.10px;font-size:15px;line-height:15px;color:#4a4a4a;font-family:'Liberation Serif',serif;left:222.00px;"><i>f</i><i style="font-size:11px">x</i></div>
<div class="a" style="top:153.84px;font-size:12px;line-height:12px;color:#217346;left:-522.00px;width:1200px;text-align:center;">A</div>
<div class="a" style="top:153.84px;font-size:12px;line-height:12px;color:#222;left:-434.00px;width:1200px;text-align:center;">B</div>
<div class="a" style="top:153.84px;font-size:12px;line-height:12px;color:#222;left:-331.50px;width:1200px;text-align:center;">C</div>
<div class="a" style="top:153.84px;font-size:12px;line-height:12px;color:#222;left:-214.50px;width:1200px;text-align:center;">D</div>
<div class="a" style="top:153.84px;font-size:12px;line-height:12px;color:#222;left:-97.50px;width:1200px;text-align:center;">E</div>
<div class="a" style="top:153.84px;font-size:12px;line-height:12px;color:#222;left:12.00px;width:1200px;text-align:center;">F</div>
<div class="a" style="top:153.84px;font-size:12px;line-height:12px;color:#222;left:120.00px;width:1200px;text-align:center;">G</div>
<div class="a" style="top:153.84px;font-size:12px;line-height:12px;color:#222;left:234.50px;width:1200px;text-align:center;">H</div>
<div class="a" style="top:153.84px;font-size:12px;line-height:12px;color:#222;left:364.50px;width:1200px;text-align:center;">I</div>
<div class="a" style="top:153.84px;font-size:12px;line-height:12px;color:#222;left:526.50px;width:1200px;text-align:center;">J</div>
<div class="a" style="top:153.84px;font-size:12px;line-height:12px;color:#222;left:688.50px;width:1200px;text-align:center;">K</div>
<div class="a" style="top:153.84px;font-size:12px;line-height:12px;color:#222;left:903.50px;width:1200px;text-align:center;">L</div>
<div class="a" style="top:276.24px;font-size:12px;line-height:12px;color:#222;left:-587.00px;width:1200px;text-align:center;">1</div>
<div class="a" style="top:296.24px;font-size:12px;line-height:12px;color:#222;left:-587.00px;width:1200px;text-align:center;">2</div>
<div class="a" style="top:316.24px;font-size:12px;line-height:12px;color:#222;left:-587.00px;width:1200px;text-align:center;">3</div>
<div class="a" style="top:340.24px;font-size:12px;line-height:12px;color:#222;left:-587.00px;width:1200px;text-align:center;">4</div>
<div class="a" style="top:364.24px;font-size:12px;line-height:12px;color:#222;left:-587.00px;width:1200px;text-align:center;">5</div>
<div class="a" style="top:388.24px;font-size:12px;line-height:12px;color:#222;left:-587.00px;width:1200px;text-align:center;">6</div>
<div class="a" style="top:412.24px;font-size:12px;line-height:12px;color:#222;left:-587.00px;width:1200px;text-align:center;">7</div>
<div class="a" style="top:436.24px;font-size:12px;line-height:12px;color:#222;left:-587.00px;width:1200px;text-align:center;">8</div>
<div class="a" style="top:460.24px;font-size:12px;line-height:12px;color:#222;left:-587.00px;width:1200px;text-align:center;">9</div>
<div class="a" style="top:484.24px;font-size:12px;line-height:12px;color:#222;left:-587.00px;width:1200px;text-align:center;">10</div>
<div class="a" style="top:508.24px;font-size:12px;line-height:12px;color:#222;left:-587.00px;width:1200px;text-align:center;">11</div>
<div class="a" style="top:532.24px;font-size:12px;line-height:12px;color:#222;left:-587.00px;width:1200px;text-align:center;">12</div>
<div class="a" style="top:556.24px;font-size:12px;line-height:12px;color:#222;left:-587.00px;width:1200px;text-align:center;">13</div>
<div class="a" style="top:580.24px;font-size:12px;line-height:12px;color:#222;left:-587.00px;width:1200px;text-align:center;">14</div>
<div class="a" style="top:600.24px;font-size:12px;line-height:12px;color:#222;left:-587.00px;width:1200px;text-align:center;">15</div>
<div class="a" style="top:620.24px;font-size:12px;line-height:12px;color:#222;left:-587.00px;width:1200px;text-align:center;">16</div>
<div class="a" style="top:640.24px;font-size:12px;line-height:12px;color:#222;left:-587.00px;width:1200px;text-align:center;">17</div>
<div class="a" style="top:660.24px;font-size:12px;line-height:12px;color:#222;left:-587.00px;width:1200px;text-align:center;">18</div>
<div class="a" style="top:680.24px;font-size:12px;line-height:12px;color:#222;left:-587.00px;width:1200px;text-align:center;">19</div>
<div class="a" style="top:700.24px;font-size:12px;line-height:12px;color:#222;left:-587.00px;width:1200px;text-align:center;">20</div>
<div class="a" style="top:720.24px;font-size:12px;line-height:12px;color:#217346;left:-587.00px;width:1200px;text-align:center;">21</div>
<div class="a" style="top:740.24px;font-size:12px;line-height:12px;color:#222;left:-587.00px;width:1200px;text-align:center;">22</div>
<div class="a" style="top:760.24px;font-size:12px;line-height:12px;color:#222;left:-587.00px;width:1200px;text-align:center;">23</div>
<div class="a" style="top:221.76px;font-size:18px;line-height:18px;color:#fff;font-weight:700;left:717.40px;"><span style="display:inline-block;transform:scaleX(1.0091);transform-origin:left center">Avaliação de Desempenho</span></div>
<div class="a" style="top:293.85px;font-size:14px;line-height:14px;color:#fff;left:355.40px;"><span style="display:inline-block;transform:scaleX(0.9864);transform-origin:left center">Média de status</span></div>
<div class="a" style="top:293.85px;font-size:14px;line-height:14px;color:#fff;left:1176.70px;"><span style="display:inline-block;transform:scaleX(1.0148);transform-origin:left center">Média total</span></div>
<div class="a" style="top:409.85px;font-size:14px;line-height:14px;color:#fff;left:438.60px;">Proatividade</div>
<div class="a" style="top:409.72px;font-size:12.5px;line-height:12.5px;color:#fff;left:12.00px;width:1200px;text-align:center;">78,0%</div>
<div class="a" style="top:433.85px;font-size:14px;line-height:14px;color:#fff;left:438.60px;">Trabalho em equipe</div>
<div class="a" style="top:433.72px;font-size:12.5px;line-height:12.5px;color:#fff;left:12.00px;width:1200px;text-align:center;">74,0%</div>
<div class="a" style="top:457.85px;font-size:14px;line-height:14px;color:#fff;left:438.60px;">Inovação</div>
<div class="a" style="top:457.72px;font-size:12.5px;line-height:12.5px;color:#fff;left:12.00px;width:1200px;text-align:center;">68,0%</div>
<div class="a" style="top:481.85px;font-size:14px;line-height:14px;color:#fff;left:438.60px;">Assiduidade</div>
<div class="a" style="top:481.72px;font-size:12.5px;line-height:12.5px;color:#fff;left:12.00px;width:1200px;text-align:center;">48,0%</div>
<div class="a" style="top:505.85px;font-size:14px;line-height:14px;color:#fff;left:438.60px;">Criatividade</div>
<div class="a" style="top:505.72px;font-size:12.5px;line-height:12.5px;color:#fff;left:12.00px;width:1200px;text-align:center;">40,0%</div>
<div class="a" style="top:529.85px;font-size:14px;line-height:14px;color:#fff;left:438.60px;">Outros critérios</div>
<div class="a" style="top:529.72px;font-size:12.5px;line-height:12.5px;color:#fff;left:12.00px;width:1200px;text-align:center;">60,0%</div>
<div class="a" style="top:553.85px;font-size:14px;line-height:14px;color:#fff;left:438.60px;">Outros critérios</div>
<div class="a" style="top:553.72px;font-size:12.5px;line-height:12.5px;color:#fff;left:12.00px;width:1200px;text-align:center;">42,4%</div>
<div class="a" style="top:409.85px;font-size:14px;line-height:14px;color:#fff;left:788.80px;">Média equipe</div>
<div class="a" style="top:409.72px;font-size:12.5px;line-height:12.5px;color:#fff;left:364.50px;width:1200px;text-align:center;">63%</div>
<div class="a" style="top:433.85px;font-size:14px;line-height:14px;color:#fff;left:788.80px;">Ideal</div>
<div class="a" style="top:433.72px;font-size:12.5px;line-height:12.5px;color:#fff;left:364.50px;width:1200px;text-align:center;">100%</div>
<div class="a" style="top:457.85px;font-size:14px;line-height:14px;color:#fff;left:788.80px;">Falta atingir</div>
<div class="a" style="top:457.72px;font-size:12.5px;line-height:12.5px;color:#fff;left:364.50px;width:1200px;text-align:center;">37%</div>
<div class="a" style="top:483.11px;font-size:10.5px;line-height:10.5px;color:#f0f0f0;left:-1128.00px;width:1200px;text-align:right;-webkit-text-stroke:0.15px #f0f0f0;">0,0%</div>
<div class="a" style="top:466.97px;font-size:10.5px;line-height:10.5px;color:#f0f0f0;left:-1128.00px;width:1200px;text-align:right;-webkit-text-stroke:0.15px #f0f0f0;">10,0%</div>
<div class="a" style="top:450.84px;font-size:10.5px;line-height:10.5px;color:#f0f0f0;left:-1128.00px;width:1200px;text-align:right;-webkit-text-stroke:0.15px #f0f0f0;">20,0%</div>
<div class="a" style="top:434.70px;font-size:10.5px;line-height:10.5px;color:#f0f0f0;left:-1128.00px;width:1200px;text-align:right;-webkit-text-stroke:0.15px #f0f0f0;">30,0%</div>
<div class="a" style="top:418.56px;font-size:10.5px;line-height:10.5px;color:#f0f0f0;left:-1128.00px;width:1200px;text-align:right;-webkit-text-stroke:0.15px #f0f0f0;">40,0%</div>
<div class="a" style="top:402.43px;font-size:10.5px;line-height:10.5px;color:#f0f0f0;left:-1128.00px;width:1200px;text-align:right;-webkit-text-stroke:0.15px #f0f0f0;">50,0%</div>
<div class="a" style="top:386.29px;font-size:10.5px;line-height:10.5px;color:#f0f0f0;left:-1128.00px;width:1200px;text-align:right;-webkit-text-stroke:0.15px #f0f0f0;">60,0%</div>
<div class="a" style="top:370.15px;font-size:10.5px;line-height:10.5px;color:#f0f0f0;left:-1128.00px;width:1200px;text-align:right;-webkit-text-stroke:0.15px #f0f0f0;">70,0%</div>
<div class="a" style="top:354.02px;font-size:10.5px;line-height:10.5px;color:#f0f0f0;left:-1128.00px;width:1200px;text-align:right;-webkit-text-stroke:0.15px #f0f0f0;">80,0%</div>
<div class="a" style="top:340.59px;font-size:10.5px;line-height:10.5px;color:#e6e6e6;left:-493.50px;width:1200px;text-align:center;-webkit-text-stroke:0.15px #e6e6e6;">78,0%</div>
<div class="a" style="top:347.22px;font-size:10.5px;line-height:10.5px;color:#e6e6e6;left:-454.93px;width:1200px;text-align:center;-webkit-text-stroke:0.15px #e6e6e6;">74,0%</div>
<div class="a" style="top:357.17px;font-size:10.5px;line-height:10.5px;color:#e6e6e6;left:-416.36px;width:1200px;text-align:center;-webkit-text-stroke:0.15px #e6e6e6;">68,0%</div>
<div class="a" style="top:390.33px;font-size:10.5px;line-height:10.5px;color:#e6e6e6;left:-377.79px;width:1200px;text-align:center;-webkit-text-stroke:0.15px #e6e6e6;">48,0%</div>
<div class="a" style="top:403.59px;font-size:10.5px;line-height:10.5px;color:#e6e6e6;left:-339.22px;width:1200px;text-align:center;-webkit-text-stroke:0.15px #e6e6e6;">40,0%</div>
<div class="a" style="top:370.43px;font-size:10.5px;line-height:10.5px;color:#e6e6e6;left:-300.65px;width:1200px;text-align:center;-webkit-text-stroke:0.15px #e6e6e6;">60,0%</div>
<div class="a" style="top:399.61px;font-size:10.5px;line-height:10.5px;color:#e6e6e6;left:-262.08px;width:1200px;text-align:center;-webkit-text-stroke:0.15px #e6e6e6;">42,4%</div>
<div class="a" style="top:593.13px;font-size:10px;line-height:10px;color:#d0e2f2;left:200.10px;"><span style="display:inline-block;transform:scaleX(0.9790);transform-origin:left center">Série1</span></div>
<div class="a" style="top:394.41px;font-size:10.5px;line-height:10.5px;color:#fff;left:641.60px;width:1200px;text-align:center;">19%</div>
<div class="a" style="top:412.26px;font-size:10.5px;line-height:10.5px;color:#fff;left:727.15px;width:1200px;text-align:center;">31%</div>
<div class="a" style="top:504.01px;font-size:10.5px;line-height:10.5px;color:#fff;left:650.25px;width:1200px;text-align:center;">50%</div>
<div class="a" style="top:330.04px;font-size:18.5px;line-height:18.5px;color:#f2f2f2;font-weight:700;letter-spacing:1.2px;left:1198.50px;text-shadow:1px 1px 2px #222;"><span style="display:inline-block;transform:scaleX(0.9900);transform-origin:left center">Resultado Final</span></div>
<div class="a" style="top:554.89px;font-size:11px;line-height:11px;color:#f2f2f2;left:1185.60px;"><span style="display:inline-block;transform:scaleX(1.0036);transform-origin:left center">Média equipe</span></div>
<div class="a" style="top:554.89px;font-size:11px;line-height:11px;color:#f2f2f2;left:1275.00px;"><span style="display:inline-block;transform:scaleX(1.0059);transform-origin:left center">Ideal</span></div>
<div class="a" style="top:554.89px;font-size:11px;line-height:11px;color:#f2f2f2;left:1322.30px;"><span style="display:inline-block;transform:scaleX(0.9916);transform-origin:left center">Falta atingir</span></div>
<div class="a" style="top:598.15px;font-size:14px;line-height:14px;color:#fff;left:28.60px;"><span style="display:inline-block;transform:scaleX(0.9842);transform-origin:left center">Funcionário</span></div>
<div class="a" style="top:598.15px;font-size:14px;line-height:14px;color:#fff;left:133.60px;"><span style="display:inline-block;transform:scaleX(0.9739);transform-origin:left center">Resultado</span></div>
<div class="a" style="top:598.15px;font-size:14px;line-height:14px;color:#fff;left:204.60px;"><span style="display:inline-block;transform:scaleX(0.9902);transform-origin:left center">Trabalho em equipe</span></div>
<div class="a" style="top:598.15px;font-size:14px;line-height:14px;color:#fff;left:338.60px;">Proatividade</div>
<div class="a" style="top:598.15px;font-size:14px;line-height:14px;color:#fff;left:438.60px;">Assiduidade</div>
<div class="a" style="top:598.15px;font-size:14px;line-height:14px;color:#fff;left:572.60px;">Criatividade</div>
<div class="a" style="top:598.15px;font-size:14px;line-height:14px;color:#fff;left:657.60px;"><span style="display:inline-block;transform:scaleX(0.9902);transform-origin:left center">Trabalho em equipe</span></div>
<div class="a" style="top:598.15px;font-size:14px;line-height:14px;color:#fff;left:788.60px;">Inovação</div>
<div class="a" style="top:598.15px;font-size:14px;line-height:14px;color:#fff;left:886.60px;">Adicione outros critérios</div>
<div class="a" style="top:598.15px;font-size:14px;line-height:14px;color:#fff;left:1048.60px;">Adicione outros critérios</div>
<div class="a" style="top:598.15px;font-size:14px;line-height:14px;color:#fff;left:1210.60px;">Adicione outros critérios</div>
<div class="a" style="top:598.15px;font-size:14px;line-height:14px;color:#fff;left:1372.60px;">Observações</div>
<div class="a" style="top:620.07px;font-size:11.5px;line-height:11.5px;color:#000;letter-spacing:0.5px;left:28.60px;-webkit-text-stroke:0.15px #000;"><span style="display:inline-block;transform:scaleX(0.9962);transform-origin:left center">Funcinário 01</span></div>
<div class="a" style="top:620.07px;font-size:11.5px;line-height:11.5px;color:#000;letter-spacing:0.3px;left:-428.00px;width:1200px;text-align:center;-webkit-text-stroke:0.15px #000;">70%</div>
<div class="a" style="top:620.07px;font-size:11.5px;line-height:11.5px;color:#000;letter-spacing:0.3px;left:-325.50px;width:1200px;text-align:center;-webkit-text-stroke:0.15px #000;">80%</div>
<div class="a" style="top:620.07px;font-size:11.5px;line-height:11.5px;color:#000;letter-spacing:0.3px;left:-208.50px;width:1200px;text-align:center;-webkit-text-stroke:0.15px #000;">50%</div>
<div class="a" style="top:620.07px;font-size:11.5px;line-height:11.5px;color:#000;letter-spacing:0.3px;left:-91.50px;width:1200px;text-align:center;-webkit-text-stroke:0.15px #000;">90%</div>
<div class="a" style="top:620.07px;font-size:11.5px;line-height:11.5px;color:#000;letter-spacing:0.3px;left:18.00px;width:1200px;text-align:center;-webkit-text-stroke:0.15px #000;">40%</div>
<div class="a" style="top:620.07px;font-size:11.5px;line-height:11.5px;color:#000;letter-spacing:0.3px;left:126.00px;width:1200px;text-align:center;-webkit-text-stroke:0.15px #000;">70%</div>
<div class="a" style="top:620.07px;font-size:11.5px;line-height:11.5px;color:#000;letter-spacing:0.3px;left:240.50px;width:1200px;text-align:center;-webkit-text-stroke:0.15px #000;">80%</div>
<div class="a" style="top:620.07px;font-size:11.5px;line-height:11.5px;color:#000;letter-spacing:0.3px;left:370.50px;width:1200px;text-align:center;-webkit-text-stroke:0.15px #000;">90%</div>
<div class="a" style="top:620.07px;font-size:11.5px;line-height:11.5px;color:#000;letter-spacing:0.3px;left:532.50px;width:1200px;text-align:center;-webkit-text-stroke:0.15px #000;">30%</div>
<div class="a" style="top:620.07px;font-size:11.5px;line-height:11.5px;color:#000;letter-spacing:0.3px;left:694.50px;width:1200px;text-align:center;-webkit-text-stroke:0.15px #000;">20,00%</div>
<div class="a" style="top:620.07px;font-size:11.5px;line-height:11.5px;color:#000;letter-spacing:0.4px;left:1372.50px;-webkit-text-stroke:0.15px #000;"><span style="display:inline-block;transform:scaleX(1.0240);transform-origin:left center">Precisa melhorar  criatividade</span></div>
<div class="a" style="top:640.07px;font-size:11.5px;line-height:11.5px;color:#000;letter-spacing:0.5px;left:28.60px;-webkit-text-stroke:0.15px #000;"><span style="display:inline-block;transform:scaleX(0.9962);transform-origin:left center">Funcinário 02</span></div>
<div class="a" style="top:640.07px;font-size:11.5px;line-height:11.5px;color:#000;letter-spacing:0.3px;left:-428.00px;width:1200px;text-align:center;-webkit-text-stroke:0.15px #000;">50%</div>
<div class="a" style="top:640.07px;font-size:11.5px;line-height:11.5px;color:#000;letter-spacing:0.3px;left:-325.50px;width:1200px;text-align:center;-webkit-text-stroke:0.15px #000;">90%</div>
<div class="a" style="top:640.07px;font-size:11.5px;line-height:11.5px;color:#000;letter-spacing:0.3px;left:-208.50px;width:1200px;text-align:center;-webkit-text-stroke:0.15px #000;">85%</div>
<div class="a" style="top:640.07px;font-size:11.5px;line-height:11.5px;color:#000;letter-spacing:0.3px;left:-91.50px;width:1200px;text-align:center;-webkit-text-stroke:0.15px #000;">20%</div>
<div class="a" style="top:640.07px;font-size:11.5px;line-height:11.5px;color:#000;letter-spacing:0.3px;left:18.00px;width:1200px;text-align:center;-webkit-text-stroke:0.15px #000;">30%</div>
<div class="a" style="top:640.07px;font-size:11.5px;line-height:11.5px;color:#000;letter-spacing:0.3px;left:126.00px;width:1200px;text-align:center;-webkit-text-stroke:0.15px #000;">50%</div>
<div class="a" style="top:640.07px;font-size:11.5px;line-height:11.5px;color:#000;letter-spacing:0.3px;left:240.50px;width:1200px;text-align:center;-webkit-text-stroke:0.15px #000;">65%</div>
<div class="a" style="top:640.07px;font-size:11.5px;line-height:11.5px;color:#000;letter-spacing:0.3px;left:370.50px;width:1200px;text-align:center;-webkit-text-stroke:0.15px #000;">30%</div>
<div class="a" style="top:640.07px;font-size:11.5px;line-height:11.5px;color:#000;letter-spacing:0.3px;left:532.50px;width:1200px;text-align:center;-webkit-text-stroke:0.15px #000;">22%</div>
<div class="a" style="top:640.07px;font-size:11.5px;line-height:11.5px;color:#000;letter-spacing:0.3px;left:694.50px;width:1200px;text-align:center;-webkit-text-stroke:0.15px #000;">70%</div>
<div class="a" style="top:640.07px;font-size:11.5px;line-height:11.5px;color:#000;letter-spacing:0.4px;left:1372.50px;-webkit-text-stroke:0.15px #000;"><span style="display:inline-block;transform:scaleX(1.0240);transform-origin:left center">Precisa melhorar  criatividade</span></div>
<div class="a" style="top:660.07px;font-size:11.5px;line-height:11.5px;color:#000;letter-spacing:0.5px;left:28.60px;-webkit-text-stroke:0.15px #000;"><span style="display:inline-block;transform:scaleX(0.9962);transform-origin:left center">Funcinário 03</span></div>
<div class="a" style="top:660.07px;font-size:11.5px;line-height:11.5px;color:#000;letter-spacing:0.3px;left:-428.00px;width:1200px;text-align:center;-webkit-text-stroke:0.15px #000;">65%</div>
<div class="a" style="top:660.07px;font-size:11.5px;line-height:11.5px;color:#000;letter-spacing:0.3px;left:-325.50px;width:1200px;text-align:center;-webkit-text-stroke:0.15px #000;">30%</div>
<div class="a" style="top:660.07px;font-size:11.5px;line-height:11.5px;color:#000;letter-spacing:0.3px;left:-208.50px;width:1200px;text-align:center;-webkit-text-stroke:0.15px #000;">85%</div>
<div class="a" style="top:660.07px;font-size:11.5px;line-height:11.5px;color:#000;letter-spacing:0.3px;left:-91.50px;width:1200px;text-align:center;-webkit-text-stroke:0.15px #000;">90%</div>
<div class="a" style="top:660.07px;font-size:11.5px;line-height:11.5px;color:#000;letter-spacing:0.3px;left:18.00px;width:1200px;text-align:center;-webkit-text-stroke:0.15px #000;">70%</div>
<div class="a" style="top:660.07px;font-size:11.5px;line-height:11.5px;color:#000;letter-spacing:0.3px;left:126.00px;width:1200px;text-align:center;-webkit-text-stroke:0.15px #000;">50%</div>
<div class="a" style="top:660.07px;font-size:11.5px;line-height:11.5px;color:#000;letter-spacing:0.3px;left:240.50px;width:1200px;text-align:center;-webkit-text-stroke:0.15px #000;">65%</div>
<div class="a" style="top:660.07px;font-size:11.5px;line-height:11.5px;color:#000;letter-spacing:0.3px;left:370.50px;width:1200px;text-align:center;-webkit-text-stroke:0.15px #000;">65%</div>
<div class="a" style="top:660.07px;font-size:11.5px;line-height:11.5px;color:#000;letter-spacing:0.3px;left:532.50px;width:1200px;text-align:center;-webkit-text-stroke:0.15px #000;">60%</div>
<div class="a" style="top:660.07px;font-size:11.5px;line-height:11.5px;color:#000;letter-spacing:0.3px;left:694.50px;width:1200px;text-align:center;-webkit-text-stroke:0.15px #000;">70%</div>
<div class="a" style="top:660.07px;font-size:11.5px;line-height:11.5px;color:#000;letter-spacing:0.4px;left:1372.50px;-webkit-text-stroke:0.15px #000;"><span style="display:inline-block;transform:scaleX(1.0240);transform-origin:left center">Precisa melhorar  criatividade</span></div>
<div class="a" style="top:680.07px;font-size:11.5px;line-height:11.5px;color:#000;letter-spacing:0.5px;left:28.60px;-webkit-text-stroke:0.15px #000;"><span style="display:inline-block;transform:scaleX(0.9962);transform-origin:left center">Funcinário 04</span></div>
<div class="a" style="top:680.07px;font-size:11.5px;line-height:11.5px;color:#000;letter-spacing:0.3px;left:-428.00px;width:1200px;text-align:center;-webkit-text-stroke:0.15px #000;">65%</div>
<div class="a" style="top:680.07px;font-size:11.5px;line-height:11.5px;color:#000;letter-spacing:0.3px;left:-325.50px;width:1200px;text-align:center;-webkit-text-stroke:0.15px #000;">90%</div>
<div class="a" style="top:680.07px;font-size:11.5px;line-height:11.5px;color:#000;letter-spacing:0.3px;left:-208.50px;width:1200px;text-align:center;-webkit-text-stroke:0.15px #000;">85%</div>
<div class="a" style="top:680.07px;font-size:11.5px;line-height:11.5px;color:#000;letter-spacing:0.3px;left:-91.50px;width:1200px;text-align:center;-webkit-text-stroke:0.15px #000;">20%</div>
<div class="a" style="top:680.07px;font-size:11.5px;line-height:11.5px;color:#000;letter-spacing:0.3px;left:18.00px;width:1200px;text-align:center;-webkit-text-stroke:0.15px #000;">30%</div>
<div class="a" style="top:680.07px;font-size:11.5px;line-height:11.5px;color:#000;letter-spacing:0.3px;left:126.00px;width:1200px;text-align:center;-webkit-text-stroke:0.15px #000;">50%</div>
<div class="a" style="top:680.07px;font-size:11.5px;line-height:11.5px;color:#000;letter-spacing:0.3px;left:240.50px;width:1200px;text-align:center;-webkit-text-stroke:0.15px #000;">65%</div>
<div class="a" style="top:680.07px;font-size:11.5px;line-height:11.5px;color:#000;letter-spacing:0.3px;left:370.50px;width:1200px;text-align:center;-webkit-text-stroke:0.15px #000;">45%</div>
<div class="a" style="top:680.07px;font-size:11.5px;line-height:11.5px;color:#000;letter-spacing:0.3px;left:532.50px;width:1200px;text-align:center;-webkit-text-stroke:0.15px #000;">90%</div>
<div class="a" style="top:680.07px;font-size:11.5px;line-height:11.5px;color:#000;letter-spacing:0.3px;left:694.50px;width:1200px;text-align:center;-webkit-text-stroke:0.15px #000;">70%</div>
<div class="a" style="top:680.07px;font-size:11.5px;line-height:11.5px;color:#000;letter-spacing:0.4px;left:1372.50px;-webkit-text-stroke:0.15px #000;"><span style="display:inline-block;transform:scaleX(1.0240);transform-origin:left center">Precisa melhorar  criatividade</span></div>
<div class="a" style="top:700.07px;font-size:11.5px;line-height:11.5px;color:#000;letter-spacing:0.5px;left:28.60px;-webkit-text-stroke:0.15px #000;"><span style="display:inline-block;transform:scaleX(0.9962);transform-origin:left center">Funcinário 05</span></div>
<div class="a" style="top:700.07px;font-size:11.5px;line-height:11.5px;color:#000;letter-spacing:0.3px;left:-428.00px;width:1200px;text-align:center;-webkit-text-stroke:0.15px #000;">65%</div>
<div class="a" style="top:700.07px;font-size:11.5px;line-height:11.5px;color:#000;letter-spacing:0.3px;left:-325.50px;width:1200px;text-align:center;-webkit-text-stroke:0.15px #000;">80%</div>
<div class="a" style="top:700.07px;font-size:11.5px;line-height:11.5px;color:#000;letter-spacing:0.3px;left:-208.50px;width:1200px;text-align:center;-webkit-text-stroke:0.15px #000;">85%</div>
<div class="a" style="top:700.07px;font-size:11.5px;line-height:11.5px;color:#000;letter-spacing:0.3px;left:-91.50px;width:1200px;text-align:center;-webkit-text-stroke:0.15px #000;">20%</div>
<div class="a" style="top:700.07px;font-size:11.5px;line-height:11.5px;color:#000;letter-spacing:0.3px;left:18.00px;width:1200px;text-align:center;-webkit-text-stroke:0.15px #000;">30%</div>
<div class="a" style="top:700.07px;font-size:11.5px;line-height:11.5px;color:#000;letter-spacing:0.3px;left:126.00px;width:1200px;text-align:center;-webkit-text-stroke:0.15px #000;">50%</div>
<div class="a" style="top:700.07px;font-size:11.5px;line-height:11.5px;color:#000;letter-spacing:0.3px;left:240.50px;width:1200px;text-align:center;-webkit-text-stroke:0.15px #000;">65%</div>
<div class="a" style="top:700.07px;font-size:11.5px;line-height:11.5px;color:#000;letter-spacing:0.3px;left:370.50px;width:1200px;text-align:center;-webkit-text-stroke:0.15px #000;">70%</div>
<div class="a" style="top:700.07px;font-size:11.5px;line-height:11.5px;color:#000;letter-spacing:0.3px;left:532.50px;width:1200px;text-align:center;-webkit-text-stroke:0.15px #000;">10%</div>
<div class="a" style="top:700.07px;font-size:11.5px;line-height:11.5px;color:#000;letter-spacing:0.3px;left:694.50px;width:1200px;text-align:center;-webkit-text-stroke:0.15px #000;">70%</div>
<div class="a" style="top:700.07px;font-size:11.5px;line-height:11.5px;color:#000;letter-spacing:0.4px;left:1372.50px;-webkit-text-stroke:0.15px #000;"><span style="display:inline-block;transform:scaleX(1.0240);transform-origin:left center">Precisa melhorar  criatividade</span></div>
<div class="a" style="left:-202.00px;top:499.50px;width:300px;text-align:right;font-size:11px;line-height:11px;color:#f0f0f0;-webkit-text-stroke:0.15px #f0f0f0;transform-origin:100% 0;transform:rotate(-45deg)">Proatividade</div>
<div class="a" style="left:-163.43px;top:499.50px;width:300px;text-align:right;font-size:11px;line-height:11px;color:#f0f0f0;-webkit-text-stroke:0.15px #f0f0f0;transform-origin:100% 0;transform:rotate(-45deg)">Trabalho em equipe</div>
<div class="a" style="left:-124.86px;top:499.50px;width:300px;text-align:right;font-size:11px;line-height:11px;color:#f0f0f0;-webkit-text-stroke:0.15px #f0f0f0;transform-origin:100% 0;transform:rotate(-45deg)">Inovação</div>
<div class="a" style="left:-86.29px;top:499.50px;width:300px;text-align:right;font-size:11px;line-height:11px;color:#f0f0f0;-webkit-text-stroke:0.15px #f0f0f0;transform-origin:100% 0;transform:rotate(-45deg)">Assiduidade</div>
<div class="a" style="left:-47.72px;top:499.50px;width:300px;text-align:right;font-size:11px;line-height:11px;color:#f0f0f0;-webkit-text-stroke:0.15px #f0f0f0;transform-origin:100% 0;transform:rotate(-45deg)">Criatividade</div>
<div class="a" style="left:-9.15px;top:499.50px;width:300px;text-align:right;font-size:11px;line-height:11px;color:#f0f0f0;-webkit-text-stroke:0.15px #f0f0f0;transform-origin:100% 0;transform:rotate(-45deg)">Outros critérios</div>
<div class="a" style="left:29.42px;top:499.50px;width:300px;text-align:right;font-size:11px;line-height:11px;color:#f0f0f0;-webkit-text-stroke:0.15px #f0f0f0;transform-origin:100% 0;transform:rotate(-45deg)">Outros critérios</div>
<div class="a" style="left:190.6px;top:595px;width:6px;height:6.5px;background:#ed7d31"></div>
<div class="a" style="left:24px;top:713px;width:108px;height:23px;border:2px solid #217346"></div>
<div class="a" style="left:128.5px;top:731.5px;width:6px;height:6px;background:#217346"></div>
</body></html>
